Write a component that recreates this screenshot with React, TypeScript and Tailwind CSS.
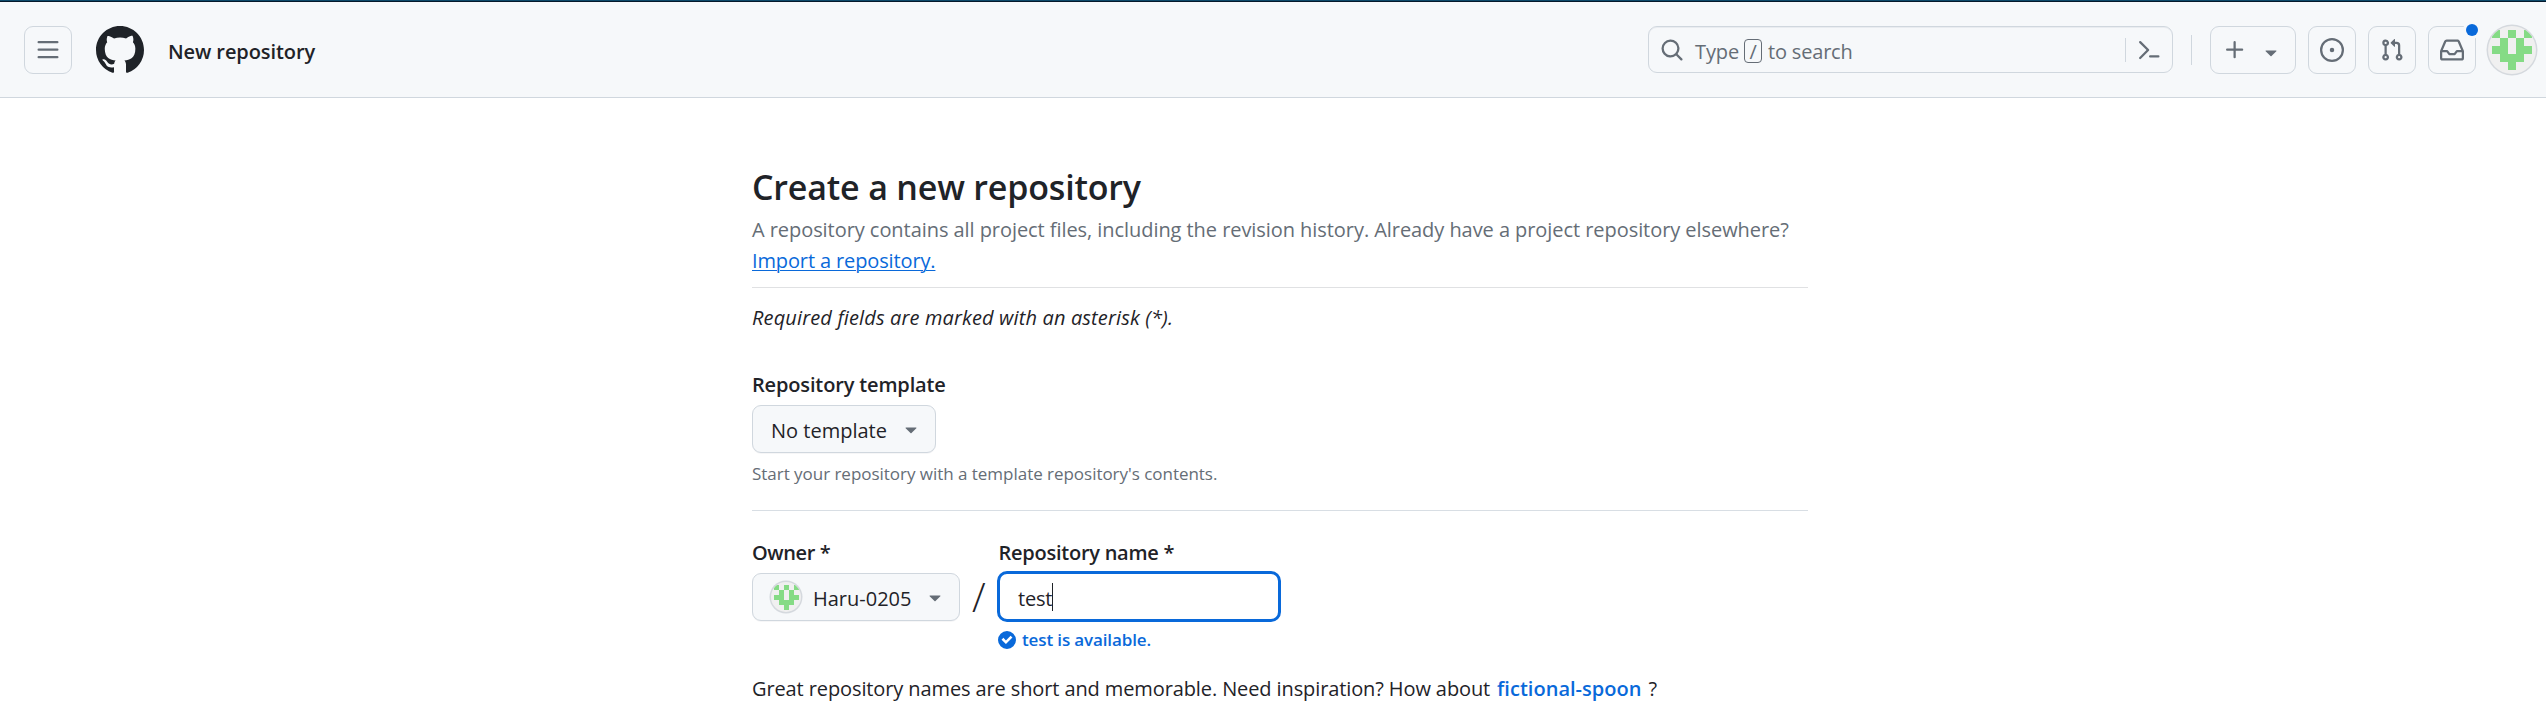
import type { ReactNode } from "react";

const paths = {
  menu: "M1 2.75A.75.75 0 0 1 1.75 2h12.5a.75.75 0 0 1 0 1.5H1.75A.75.75 0 0 1 1 2.75Zm0 5A.75.75 0 0 1 1.75 7h12.5a.75.75 0 0 1 0 1.5H1.75A.75.75 0 0 1 1 7.75ZM1.75 12h12.5a.75.75 0 0 1 0 1.5H1.75a.75.75 0 0 1 0-1.5Z",
  github:
    "M8 0c4.42 0 8 3.58 8 8a8.013 8.013 0 0 1-5.45 7.59c-.4.08-.55-.17-.55-.38 0-.27.01-1.13.01-2.2 0-.75-.25-1.23-.54-1.48 1.78-.2 3.65-.88 3.65-3.95 0-.88-.31-1.59-.82-2.15.08-.2.36-1.02-.08-2.12 0 0-.67-.22-2.2.82-.64-.18-1.32-.27-2-.27-.68 0-1.36.09-2 .27-1.53-1.03-2.2-.82-2.2-.82-.44 1.1-.16 1.92-.08 2.12-.51.56-.82 1.28-.82 2.15 0 3.06 1.86 3.75 3.64 3.95-.23.2-.44.55-.51 1.07-.46.21-1.61.55-2.33-.66-.15-.24-.6-.83-1.23-.82-.67.01-.27.38.01.53.34.19.73.9.82 1.13.16.45.68 1.31 2.69.94 0 .67.01 1.3.01 1.49 0 .21-.15.45-.55.38A7.995 7.995 0 0 1 0 8c0-4.42 3.58-8 8-8Z",
  search:
    "M10.68 11.74a6 6 0 0 1-7.922-8.982 6 6 0 0 1 8.982 7.922l3.04 3.04a.749.749 0 0 1-.326 1.275.749.749 0 0 1-.734-.215ZM11.5 7a4.499 4.499 0 1 0-8.997 0A4.499 4.499 0 0 0 11.5 7Z",
  command:
    "m6.354 8.04-4.773 4.773a.75.75 0 1 0 1.061 1.06L7.945 8.57a.75.75 0 0 0 0-1.06L2.642 2.206a.75.75 0 0 0-1.06 1.061L6.353 8.04ZM8.75 11.5a.75.75 0 0 0 0 1.5h5.5a.75.75 0 0 0 0-1.5h-5.5Z",
  plus: "M7.75 2a.75.75 0 0 1 .75.75V7h4.25a.75.75 0 0 1 0 1.5H8.5v4.25a.75.75 0 0 1-1.5 0V8.5H2.75a.75.75 0 0 1 0-1.5H7V2.75A.75.75 0 0 1 7.75 2Z",
  caret: "m4.427 7.427 3.396 3.396a.25.25 0 0 0 .354 0l3.396-3.396A.25.25 0 0 0 11.396 7H4.604a.25.25 0 0 0-.177.427Z",
  issue: "M8 9.5a1.5 1.5 0 1 0 0-3 1.5 1.5 0 0 0 0 3ZM8 0a8 8 0 1 1 0 16A8 8 0 0 1 8 0ZM1.5 8a6.5 6.5 0 1 0 13 0 6.5 6.5 0 0 0-13 0Z",
  pull: "M1.5 3.25a2.25 2.25 0 1 1 3 2.122v5.256a2.251 2.251 0 1 1-1.5 0V5.372A2.25 2.25 0 0 1 1.5 3.25Zm5.677-.177L9.573.677A.25.25 0 0 1 10 .854V2.5h1A2.5 2.5 0 0 1 13.5 5v5.628a2.251 2.251 0 1 1-1.5 0V5a1 1 0 0 0-1-1h-1v1.646a.25.25 0 0 1-.427.177L7.177 3.427a.25.25 0 0 1 0-.354ZM3.75 2.5a.75.75 0 1 0 0 1.5.75.75 0 0 0 0-1.5Zm0 9.5a.75.75 0 1 0 0 1.5.75.75 0 0 0 0-1.5Zm8.25.75a.75.75 0 1 0 1.5 0 .75.75 0 0 0-1.5 0Z",
  inbox:
    "M2.8 2.06A1.75 1.75 0 0 1 4.41 1h7.18c.7 0 1.333.417 1.61 1.06l2.74 6.395c.04.093.06.194.06.295v4.5A1.75 1.75 0 0 1 14.25 15H1.75A1.75 1.75 0 0 1 0 13.25v-4.5c0-.101.02-.202.06-.295Zm1.61.44a.25.25 0 0 0-.23.152L1.887 8H4.75a.75.75 0 0 1 .6.3L6.625 10h2.75l1.275-1.7a.75.75 0 0 1 .6-.3h2.863L11.82 2.652a.25.25 0 0 0-.23-.152Zm10.09 7h-2.875l-1.275 1.7a.75.75 0 0 1-.6.3h-3.5a.75.75 0 0 1-.6-.3L4.375 9.5H1.5v3.75c0 .138.112.25.25.25h12.5a.25.25 0 0 0 .25-.25Z",
};

function Icon({ name, className = "size-6" }: { name: keyof typeof paths; className?: string }) {
  return (
    <svg viewBox="0 0 16 16" fill="currentColor" className={`shrink-0 ${className}`} aria-hidden="true">
      <path d={paths[name]} />
    </svg>
  );
}

function CheckCircle() {
  return (
    <svg viewBox="0 0 12 12" fill="currentColor" className="size-[18px] shrink-0" aria-hidden="true">
      <path d="M6 0a6 6 0 1 1 0 12A6 6 0 0 1 6 0Zm-.705 8.737L9.63 4.403 8.392 3.166 5.295 6.263l-1.7-1.702L2.356 5.8l2.938 2.938Z" />
    </svg>
  );
}

const cells = [
  [0, 0], [2, 0], [4, 0],
  [1, 1], [3, 1],
  [0, 2], [1, 2], [3, 2], [4, 2],
  [1, 3], [2, 3], [3, 3],
  [2, 4],
];

function Identicon({ className }: { className: string }) {
  return (
    <svg
      viewBox="0 0 12 12"
      shapeRendering="crispEdges"
      className={`shrink-0 rounded-full bg-[#f0f0f0] shadow-[0_0_0_1.5px_#d5d9de] ${className}`}
      aria-hidden="true"
    >
      {cells.map(([x, y]) => (
        <rect key={`${x}-${y}`} x={1 + x * 2} y={1 + y * 2} width="2" height="2" fill="#85db85" />
      ))}
    </svg>
  );
}

function IconButton({ label, children, className = "" }: { label: string; children: ReactNode; className?: string }) {
  return (
    <button
      aria-label={label}
      className={`relative flex size-12 shrink-0 items-center justify-center rounded-[9px] border border-[#d0d7de] text-[#656d76] ${className}`}
    >
      {children}
    </button>
  );
}

function Header() {
  return (
    <header className="flex h-24 items-center border-b border-[#d0d7de] bg-[#f6f8fa] pt-px pr-2.5 pl-6">
      <IconButton label="Open menu">
        <Icon name="menu" />
      </IconButton>
      <Icon name="github" className="ml-6 size-12" />
      <span className="ml-6 pt-[3px] leading-[31px] font-semibold tracking-[-0.08px]">New repository</span>

      <div className="mb-px ml-auto flex h-[47px] w-[525px] items-center rounded-[9px] border border-[#d0d7de] pl-[11px] text-[#656d76] shadow-[inset_0_1px_0_#e9ecf0]">
        <Icon name="search" />
        <span className="ml-[11px] pt-1 leading-[31px] tracking-[-0.1px]">Type</span>
        <kbd className="mt-[7px] mb-1 ml-[5px] flex h-6 w-[18px] items-center justify-center rounded-[4px] border border-[#656d76] pt-px font-['Open_Sans'] leading-none">
          /
        </kbd>
        <span className="ml-1.5 pt-1 leading-[31px] tracking-[-0.2px]">to search</span>
        <div className="ml-auto h-6 w-px bg-[#d0d7de]" />
        <Icon name="command" className="mr-[11px] ml-[11px] size-6" />
      </div>

      <div className="ml-[18px] h-[30px] w-px bg-[#d0d7de]" />
      <button
        aria-label="Create new"
        className="ml-[18px] flex h-12 w-[86px] shrink-0 items-center rounded-[9px] border border-[#d0d7de] pl-3 text-[#656d76]"
      >
        <Icon name="plus" />
        <Icon name="caret" className="mt-1 ml-3 size-6" />
      </button>
      <IconButton label="Issues" className="ml-3">
        <Icon name="issue" />
      </IconButton>
      <IconButton label="Pull requests" className="ml-3">
        <Icon name="pull" />
      </IconButton>
      <IconButton label="Notifications" className="ml-3">
        <Icon name="inbox" />
        <span className="absolute -top-[6px] -right-[6px] size-[18px] rounded-full bg-[#f6f8fa] p-[3px]">
          <span className="block size-3 rounded-full bg-[#0969da]" />
        </span>
      </IconButton>
      <Identicon className="ml-3 size-12" />
    </header>
  );
}

export default function App() {
  return (
    <div className="h-[722px] overflow-hidden bg-white font-['Open_Sans','Noto_Sans',sans-serif] text-[20px] text-[#1f2328]">
      <div className="h-0.5 border-b border-[#04192b] bg-[#0d4a6b]" />
      <Header />
      <main className="ml-[752px] w-[1056px] pt-[65px]">
        <h1 className="text-[34px] leading-[48px] font-semibold tracking-[-0.18px]">Create a new repository</h1>
        <p className="mt-[3px] leading-[31px] text-[#656d76]">
          <span className="block tracking-[-0.06px] whitespace-nowrap">
            A repository contains all project files, including the revision history. Already have a project repository
            elsewhere?
          </span>
          <a href="#" className="tracking-[-0.13px] text-[#0969da] underline decoration-1 underline-offset-2">
            Import a repository.
          </a>
        </p>
        <hr className="mt-[11px] border-[#e0e1e3]" />
        <p className="mt-3.5 leading-[31px] tracking-[0.14px] italic">Required fields are marked with an asterisk (*).</p>

        <section className="mt-9">
          <h2 className="leading-[31px] font-semibold tracking-[-0.15px]">Repository template</h2>
          <button className="mt-[5px] flex h-12 w-[184px] items-center justify-between rounded-[9px] border border-[#d0d7de] bg-[#f6f8fa] pr-3 pl-[18px] shadow-[0_1px_0_rgba(31,35,40,0.04)]">
            <span className="pt-[3px] leading-[31px]">No template</span>
            <Icon name="caret" className="size-6 text-[#656d76]" />
          </button>
          <p className="mt-[7px] text-[17px] leading-[27px] tracking-[-0.03px] text-[#656d76]">
            Start your repository with a template repository&apos;s contents.
          </p>
        </section>
        <hr className="mt-[23px] border-[#d8dee4]" />

        <section className="mt-[26px] flex items-start">
          <div className="w-[208px]">
            <h2 className="leading-[31px] font-semibold tracking-[-0.4px]">Owner *</h2>
            <button className="mt-[5px] flex h-12 w-full items-center rounded-[9px] border border-[#d0d7de] bg-[#f6f8fa] pr-3 pl-[18px] shadow-[0_1px_0_rgba(31,35,40,0.04)]">
              <Identicon className="size-[30px]" />
              <span className="ml-3 pt-[3px] leading-[31px]">Haru-0205</span>
              <Icon name="caret" className="ml-auto size-6 text-[#656d76]" />
            </button>
          </div>
          <span className="mt-8 w-[37px] pl-3 text-[40px] leading-[55px] font-light">/</span>
          <div>
            <h2 className="pl-[1.5px] leading-[31px] font-semibold tracking-[-0.25px]">Repository name *</h2>
            <div className="mt-[3px] flex h-[51px] w-[284px] items-center rounded-[10px] border-[3px] border-[#0969da] pl-[18px]">
              <span className="pt-[3px] leading-[31px] tracking-[-0.2px]">test</span>
              <span className="h-7 w-px bg-[#1f2328]" />
            </div>
            <p className="mt-1 flex items-center gap-1.5 pl-px text-[17px] leading-[27px] font-semibold tracking-[-0.13px] text-[#0969da]">
              <CheckCircle />
              test is available.
            </p>
          </div>
        </section>

        <p className="mt-5 flex leading-[31px] whitespace-nowrap">
          <span className="tracking-[-0.11px]">
            Great repository names are short and memorable. Need inspiration? How about
          </span>
          <a href="#" className="ml-[7px] font-semibold tracking-[0.02px] text-[#0969da]">
            fictional-spoon
          </a>
          <span className="ml-[7px]">?</span>
        </p>
      </main>
    </div>
  );
}
